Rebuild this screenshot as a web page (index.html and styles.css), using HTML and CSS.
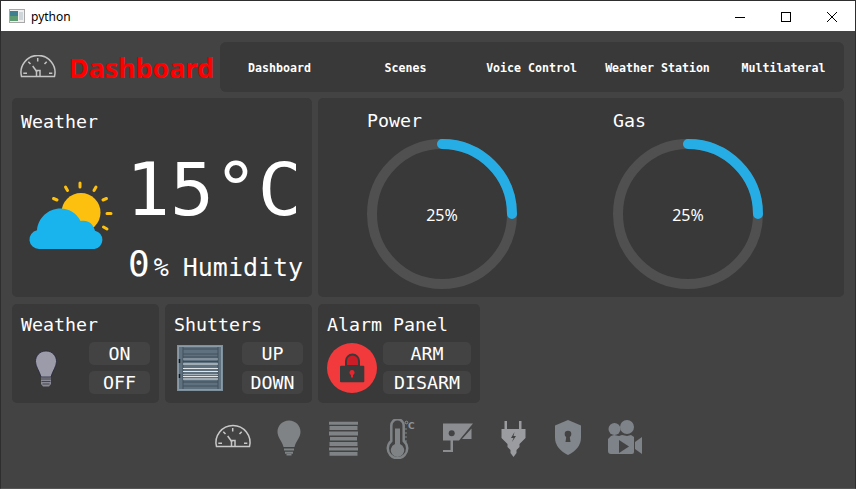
FILE: index.html
```html
<!DOCTYPE html>
<html lang="en">
<head>
<meta charset="utf-8">
<title>python</title>
<link rel="stylesheet" href="styles.css">
</head>
<body>
<div class="window">
  <div class="titlebar">
    <svg class="app-icon" width="16" height="14" viewBox="0 0 16 14"><rect x="0.5" y="0.5" width="15" height="13" fill="#f0f0f0" stroke="#a8a8a8"/><rect x="1" y="2" width="8" height="10" fill="#3f7f8f"/><rect x="1" y="7" width="8" height="5" fill="#5c9c70"/><rect x="10" y="3" width="4" height="8" fill="#cfd6da"/></svg>
    <span class="app-name">python</span>
    <div class="controls">
      <svg class="ctl" width="46" height="29" viewBox="0 0 46 29"><path d="M18 15.5h10" stroke="#000" fill="none"/></svg>
      <svg class="ctl" width="46" height="29" viewBox="0 0 46 29"><rect x="18.5" y="10.5" width="9" height="9" stroke="#000" fill="none"/></svg>
      <svg class="ctl" width="46" height="29" viewBox="0 0 46 29"><path d="M18 10l10 10M28 10l-10 10" stroke="#000" fill="none"/></svg>
    </div>
  </div>
  <main class="main">
    <header class="top">
      <div class="brand">
        <svg class="brand-icon" width="36" height="24" viewBox="0 0 36 24"><g fill="none" stroke="#c4c4c4" stroke-width="1.500"><path d="M1.500 21.500A17 17 0 1 1 34.500 21.500z"/><path d="M17.700 3v3.500M8.300 6.700l2.200 2.300M26.700 6.700L24.500 9M3.300 18.300H7M32.300 18.300H29"/><path d="M12.700 11l4.300 6"/><path d="M16.500 21.500v-6h3.500v6"/></g></svg>
        <span class="brand-name">Dashboard</span>
      </div>
      <nav class="nav">
        <span class="nav-item">Dashboard</span>
        <span class="nav-item">Scenes</span>
        <span class="nav-item">Voice Control</span>
        <span class="nav-item">Weather Station</span>
        <span class="nav-item">Multilateral</span>
      </nav>
    </header>

    <section class="row-one">
      <div class="card weather">
        <div class="card-title">Weather</div>
        <div class="weather-body">
          <svg class="weather-icon" width="88" height="72" viewBox="25 180 88 72">
            <circle cx="81" cy="212.500" r="19.500" fill="#fec00f"/>
            <g stroke="#fec00f" stroke-width="3" stroke-linecap="round">
              <path d="M80 183v4M65.500 187l2 3.500M96 187l-2 3.500M53.500 198.500l3.500 1.500M106.500 198.500l-3.500 1.500M107 213.500h4M103.500 227l3.500 2"/>
            </g>
            <path d="M39 249a9.500 9.500 0 0 1-2-18.800c1-12 11-21.700 23.500-21.700 9 0 16.500 5 20 12.500 7-1.500 12.500 2 14.500 9.700a9.300 9.300 0 0 1-.5 18.300z" fill="#19b3ee"/>
          </svg>
          <div class="weather-values">
            <div class="temp">15°C</div>
            <div class="humidity"><span class="hum-num">0</span><span>%</span><span class="hum-label">Humidity</span></div>
          </div>
        </div>
      </div>
      <div class="card gauges">
        <div class="gauge">
          <div class="gauge-title">Power</div>
          <div class="dial">
            <svg width="150" height="150" viewBox="0 0 150 150"><circle cx="75" cy="75" r="70" fill="none" stroke="#505050" stroke-width="10"/><path d="M75 5a70 70 0 0 1 70 70" fill="none" stroke="#27ade5" stroke-width="10" stroke-linecap="round"/></svg>
            <span class="dial-value">25%</span>
          </div>
        </div>
        <div class="gauge">
          <div class="gauge-title">Gas</div>
          <div class="dial">
            <svg width="150" height="150" viewBox="0 0 150 150"><circle cx="75" cy="75" r="70" fill="none" stroke="#505050" stroke-width="10"/><path d="M75 5a70 70 0 0 1 70 70" fill="none" stroke="#27ade5" stroke-width="10" stroke-linecap="round"/></svg>
            <span class="dial-value">25%</span>
          </div>
        </div>
      </div>
    </section>

    <section class="row-two">
      <div class="card small">
        <div class="card-title">Weather</div>
        <div class="small-body">
          <svg class="small-icon" width="24" height="37" viewBox="0 0 24 37"><path d="M12 1C5.500 1 1.500 6 1.500 11.500c0 5 4 9.500 5.500 15.500h10c1.500-6 5.500-10.500 5.500-15.500C22.500 6 18.500 1 12 1z" fill="#9b9ba9" stroke="#22233a" stroke-width="0.8"/><path d="M7 27.500h10v6.500l-2 2.500H9l-2-2.500z" fill="#8a8a96"/><path d="M7 29h10M7.500 31.500h9M8.500 34h7" stroke="#3c3c44" stroke-width="0.900"/></svg>
          <div class="btns">
            <span class="btn">ON</span>
            <span class="btn">OFF</span>
          </div>
        </div>
      </div>
      <div class="card small">
        <div class="card-title">Shutters</div>
        <div class="small-body">
          <svg class="small-icon shutter" width="46" height="46" viewBox="0 0 46 46"><rect width="46" height="46" fill="#7f909d"/><rect x="1.500" y="1.500" width="43" height="43" fill="#5f717f" stroke="#8a9aa6"/><path d="M6 2v42M41 2v42" stroke="#42515c"/><path d="M6 4h35M6 9h35M6 41h35" stroke="#42515c"/><g stroke="#a6b1b9"><path d="M6 14h35M6 29.500h35"/></g><g stroke="#e2e6e8"><path d="M6 19h35M6 23.500h35M6 26.500h35M6 31.500h35M6 34h35"/></g><path d="M6 12h35M6 16.500h35M6 37h35" stroke="#3e4c57"/><path d="M2.500 14v4M2.500 29v4" stroke="#14181c" stroke-width="1.500"/></svg>
          <div class="btns">
            <span class="btn">UP</span>
            <span class="btn">DOWN</span>
          </div>
        </div>
      </div>
      <div class="card alarm">
        <div class="card-title">Alarm Panel</div>
        <div class="small-body">
          <svg class="small-icon lock" width="50" height="50" viewBox="0 0 50 50"><circle cx="25" cy="25" r="25" fill="#f23a3c"/><path d="M19 23v-5a6.500 6.500 0 0 1 13 0v5z" fill="#cb1c27" stroke="#3a3a3a" stroke-width="2"/><rect x="13" y="22.700" width="24.300" height="16.600" rx="1" fill="#3a3a3a"/><circle cx="25" cy="29.500" r="2.500" fill="#e8252f"/><path d="M24 29.500h2v5h-2z" fill="#e8252f"/></svg>
          <div class="btns">
            <span class="btn">ARM</span>
            <span class="btn">DISARM</span>
          </div>
        </div>
      </div>
    </section>

    <nav class="dock">
      <svg class="dock-icon" width="40" height="40" viewBox="0 0 40 40"><g transform="translate(2 6)" fill="none" stroke="#c8c8c8" stroke-width="1.500"><path d="M1.500 21.500A17 17 0 1 1 34.500 21.500z"/><path d="M17.700 3v3.500M8.300 6.700l2.200 2.300M26.700 6.700L24.500 9M3.300 18.300H7M32.300 18.300H29"/><path d="M12.700 11l4.300 6"/><path d="M16.500 21.500v-6h3.500v6"/></g></svg>
      <svg class="dock-icon" width="40" height="40" viewBox="0 0 40 40"><path d="M21 1.500c-6.500 0-11.500 5-11.500 11.300 0 6 4.500 9 6 15.200h11c1.500-6.200 6-9.200 6-15.200C32.500 6.500 27.500 1.500 21 1.500z" fill="#7f8386"/><path d="M16 29.500h10v2H16zM17 32.700h8v2h-8zM18.500 35h5v1.500h-5z" fill="#7f8386"/></svg>
      <svg class="dock-icon" width="40" height="40" viewBox="0 0 40 40"><g fill="#7f8386"><path d="M6 2.700h29v3H6zM6.500 7h28v4h-28zM6 12.500h29v4H6zM7 18h27v3.500H7zM6.500 23h28v4h-28zM6 28.500h29v3H6zM6.500 33h28v3.700h-28z"/></g></svg>
      <svg class="dock-icon" width="40" height="40" viewBox="0 0 40 40"><path d="M13.300 6.500a6.200 6.200 0 0 1 12.400 0v15.500a9.700 9.700 0 1 1-12.400 0z" fill="none" stroke="#7f8386" stroke-width="2.500"/><path d="M17 9.500h5v15.500a6.700 6.700 0 1 1-5 0z" fill="#7f8386"/><path d="M26 10h3M26 14h3M26 18h3M26 22h3" stroke="#7f8386" stroke-width="1.200"/><circle cx="28.500" cy="3.500" r="1.300" fill="none" stroke="#8f9396"/><text x="30" y="9.500" class="dock-c">C</text></svg>
      <svg class="dock-icon far" width="40" height="40" viewBox="0 0 40 40"><path d="M5 4.500h30L21 21.500H5z" fill="#8b8d91"/><path d="M33.500 9.500V20H24z" fill="#8b8d91"/><path d="M12.500 21h2.500v12H5v-2h7.500z" fill="#8b8d91"/><circle cx="13.700" cy="14.300" r="3" fill="#434343"/></svg>
      <svg class="dock-icon" width="40" height="40" viewBox="0 0 40 40"><path d="M11.500 2h2.500v8h12V2h2.500v8h4v9l-6 6v3l-3 3v3l-3 4-3-4v-3l-3-3v-3l-6-6v-9h3z" fill="#9a9ca0"/><path d="M21.500 13l-3.500 6h2.500l-1.500 4 4-6h-2.500z" fill="#434343"/></svg>
      <svg class="dock-icon" width="40" height="40" viewBox="0 0 40 40"><path d="M20 1l13 5.500v12c0 8-5 13.500-13 17.500-8-4-13-9.500-13-17.500v-12z" fill="#80868b"/><circle cx="20" cy="15" r="3.300" fill="#434343"/><path d="M18.500 16h3l1 7h-5z" fill="#434343"/></svg>
      <svg class="dock-icon" width="40" height="40" viewBox="0 0 40 40"><g transform="translate(2 0)"><g fill="#7d8388"><circle cx="9.500" cy="10" r="6"/><circle cx="22" cy="8" r="7"/><path d="M6 17l3-1 5 1 3-1 5 1 4-1 3 2v15a2 2 0 0 1-2 2H6a3 3 0 0 1-3-3V20z"/><path d="M30 23l7-5v17l-7-5z"/></g><path d="M14 21l10 6.500-10 6.500z" fill="#434343"/></g></svg>
    </nav>
  </main>
</div>
</body>
</html>
```

FILE: styles.css
```css
* { box-sizing: border-box; }
html, body { margin: 0; padding: 0; background: #434343; }
.window {
  width: 856px;
  height: 489px;
  border: 1px solid #2e2e2e;
  border-bottom-color: #555;
  display: flex;
  flex-direction: column;
  overflow: hidden;
  background: #434343;
  font-family: "DejaVu Sans Mono", monospace;
  color: #fff;
}
.titlebar {
  height: 30px;
  flex: none;
  background: #fff;
  display: flex;
  align-items: center;
  padding-left: 8px;
}
.app-icon { flex: none; }
.app-name {
  margin-left: 6px;
  font-family: "Noto Sans", sans-serif;
  font-size: 12px;
  color: #000;
}
.controls { margin-left: auto; display: flex; }
.ctl { display: block; width: 46px; }
.main {
  flex: 1;
  display: flex;
  flex-direction: column;
  padding: 11px 11px 0;
}
.top { display: flex; height: 50px; flex: none; }
.brand {
  width: 208px;
  flex: none;
  display: flex;
  align-items: center;
  padding-left: 8px;
}
.brand-icon { flex: none; }
.brand-name {
  margin: 0 0 0 13px;
  font-family: "Noto Sans", sans-serif;
  font-weight: 700;
  font-size: 27px;
  letter-spacing: -0.1px;
  color: #ff0000;
}
.nav {
  flex: 1;
  background: #393939;
  border-radius: 6px;
  display: grid;
  grid-template-columns: repeat(5, 119px);
  column-gap: 7px;
  padding-top: 2px;
  align-items: center;
}
.nav-item {
  text-align: center;
  font-weight: 700;
  font-size: 11.600px;
}
.card { background: #393939; border-radius: 5px; }
.card-title { font-size: 18.300px; line-height: 22px; }
.row-one { display: flex; gap: 6px; margin-top: 6px; height: 199px; flex: none; }
.weather { width: 300px; padding: 13px 9px 0; flex: none; }
.weather-body { display: flex; }
.weather-icon { margin: 47px 0 0 4px; flex: none; }
.weather-values { margin-left: 12px; margin-top: 18px; }
.temp { font-size: 73px; line-height: 78px; margin-left: 1px; white-space: nowrap; }
.humidity { display: flex; align-items: baseline; white-space: nowrap; font-size: 25px; line-height: 40px; margin-left: 3px; margin-top: 15px; }
.hum-num { font-size: 36px; margin-right: 4px; }
.hum-label { margin-left: 14px; }
.gauges { flex: 1; display: flex; gap: 96px; padding: 12px 0 0 49px; }
.gauge { width: 150px; }
.gauge-title { font-size: 18.300px; line-height: 22px; }
.dial { position: relative; margin-top: 7px; width: 150px; height: 150px; }
.dial svg { display: block; }
.dial-value {
  position: absolute;
  inset: 0;
  display: flex;
  align-items: center;
  justify-content: center;
  font-family: "Noto Sans", sans-serif;
  font-size: 16px;
  padding-top: 2px;
}
.row-two { display: flex; gap: 6px; margin-top: 7px; height: 99px; flex: none; }
.small { width: 147px; padding: 10px 9px 0; flex: none; }
.alarm { width: 162px; padding: 10px 9px 0; flex: none; }
.small-body { display: flex; justify-content: space-between; align-items: center; margin-top: 6px; }
.small-icon { display: block; margin-left: 13px; }
.shutter { margin-left: 3px; }
.lock { margin-left: 0; }
.btns { display: flex; flex-direction: column; gap: 6px; }
.small .btns { width: 61px; }
.alarm .btns { width: 88px; }
.btn {
  height: 23px;
  background: #434343;
  border-radius: 5px;
  text-align: center;
  font-size: 18.300px;
  line-height: 23px;
}
.dock { display: flex; gap: 15px; margin-top: 16px; padding-left: 201px; }
.dock-icon { flex: none; display: block; }
.far { margin-left: 5px; }
.dock-c { font-family: "DejaVu Sans", sans-serif; font-size: 9px; font-weight: 700; fill: #8f9396; }
```
